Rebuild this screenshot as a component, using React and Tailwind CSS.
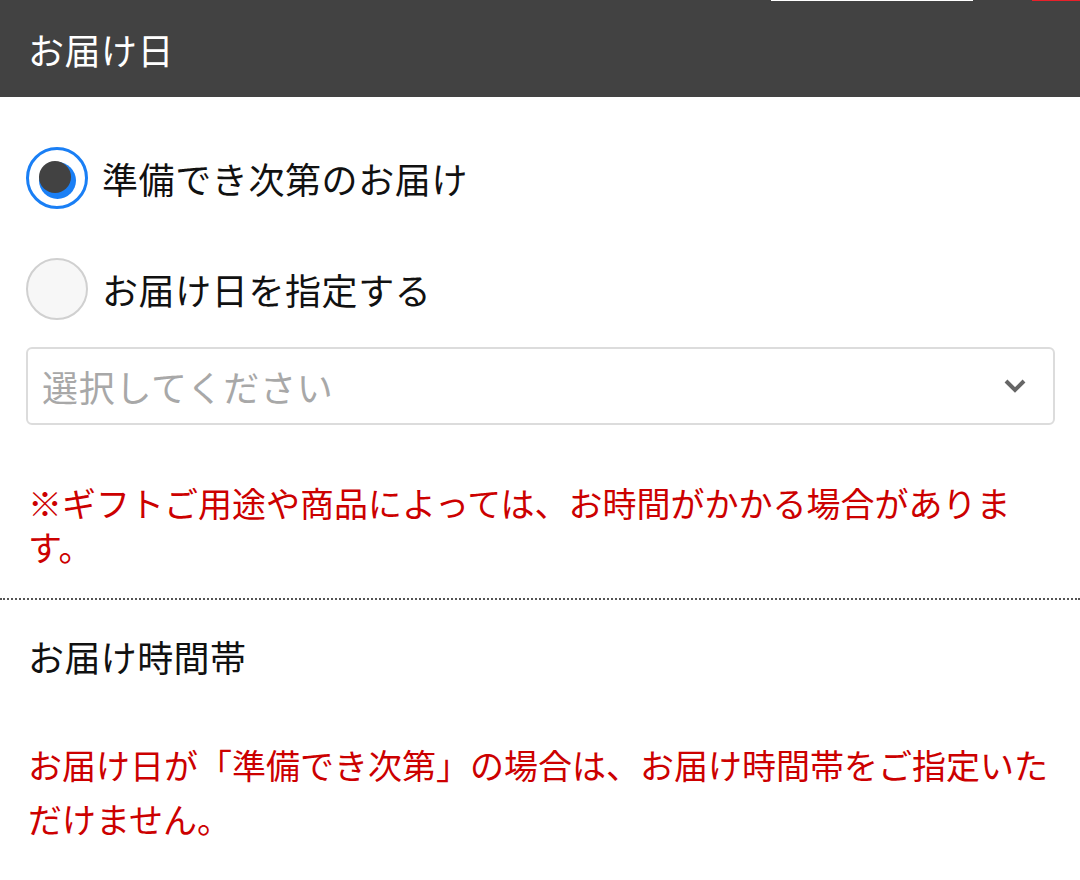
import React from 'react';

const font = { fontFamily: '"Noto Sans CJK JP", "Noto Sans", sans-serif' };

const Radio = ({ checked, label }) => (
    <label className="flex items-center h-[62px]">
        {checked ? (
            <span className="relative w-[62px] h-[62px] rounded-full border-[3px] border-[#1a7ff5] bg-white shrink-0">
                <span className="absolute left-[10px] top-[12px] w-[37px] h-[37px] rounded-full bg-[#1a7ff5]"></span>
                <span className="absolute left-[10px] top-[11px] w-[32px] h-[32px] rounded-full bg-[#424242]"></span>
            </span>
        ) : (
            <span className="w-[62px] h-[62px] rounded-full border-2 border-[#d0d0d0] bg-[#f7f7f7] shrink-0"></span>
        )}
        <span className="ml-[14px] text-[36px] tracking-[0.6px] text-[#111] leading-none">{label}</span>
    </label>
);

export default function App() {
    return (
        <div className="relative w-[1080px] h-[880px] bg-white overflow-hidden" style={font}>
            {/* top strip artifacts */}
            <div className="absolute top-0 left-[771px] w-[202px] h-px bg-white"></div>
            <div className="absolute top-0 left-[1032px] w-[48px] h-px bg-[#e8202a]"></div>

            {/* Header */}
            <div className="flex items-center h-[97px] bg-[#424242] px-[28px]">
                <h2 className="text-[36px] tracking-[0.5px] text-white leading-none">お届け日</h2>
            </div>

            <div className="px-[26px] pt-[50px]">
                <Radio checked label="準備でき次第のお届け" />
                <div className="mt-[49px]">
                    <Radio label="お届け日を指定する" />
                </div>

                {/* Select */}
                <div className="mt-[27px] w-[1029px] flex items-center justify-between h-[78px] border-2 border-[#dcdcdc] rounded-[6px] pl-[14px] pr-[26px]">
                    <span className="text-[36px] tracking-[0.7px] text-[#a8a8a8] leading-none">選択してください</span>
                    <svg width="24" height="16" viewBox="0 0 24 16" fill="none">
                        <path d="M3 3 L12 12 L21 3" stroke="#666" strokeWidth="4" />
                    </svg>
                </div>

                <p className="mt-[56px] px-[2px] w-[1026px] text-[34px] leading-[44px] text-[#cc0000]">
                    ※ギフトご用途や商品によっては、お時間がかかる場合があります。
                </p>
            </div>

            {/* Divider */}
            <div className="mt-[29px] border-t-2 border-dotted border-[#555]"></div>

            <div className="px-[28px]">
                <h3 className="mt-[38px] text-[36px] tracking-[0.4px] leading-none text-[#111]">お届け時間帯</h3>
                <p className="mt-[64px] w-[1030px] text-[34px] leading-[54px] text-[#cc0000]">
                    お届け日が「準備でき次第」の場合は、お届け時間帯をご指定いただけません。
                </p>
            </div>
        </div>
    );
}
